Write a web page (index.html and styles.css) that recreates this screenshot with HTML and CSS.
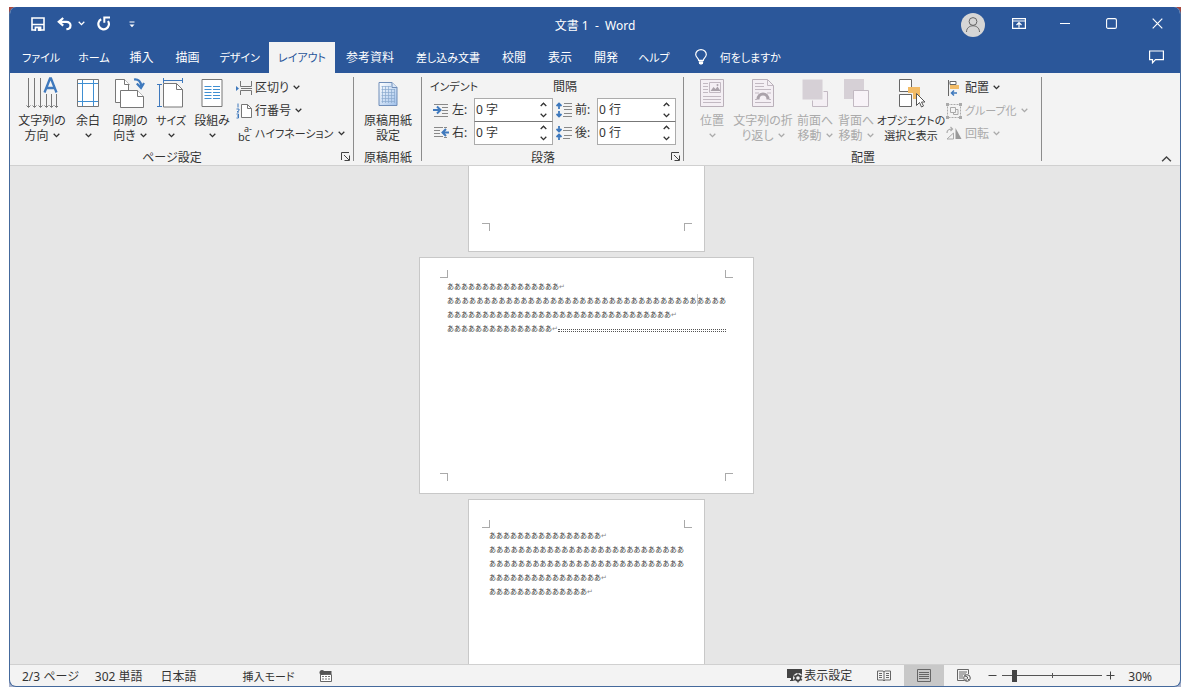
FILE: index.html
```html
<!DOCTYPE html>
<html lang="ja">
<head>
<meta charset="utf-8">
<title>文書 1 - Word</title>
<link rel="stylesheet" href="styles.css">
</head>
<body>
<svg class="defs" aria-hidden="true">
  <symbol id="chev" viewBox="0 0 7 5"><path d="M.7 .8 3.5 3.6 6.3 .8" fill="none" stroke="currentColor" stroke-width="1.3"/></symbol>
  <symbol id="chev-up" viewBox="0 0 7 5"><path d="M.7 4 3.5 1.2 6.3 4" fill="none" stroke="currentColor" stroke-width="1.3"/></symbol>
  <symbol id="launcher" viewBox="0 0 10 10"><path d="M.5 8V.5H8M3 3l5 5M8.5 3.5v5h-5" fill="none" stroke="#444"/></symbol>
</svg>
<div class="desktop">
<div class="window">
  <header class="titlebar">
    <div class="quick">
      <button class="plain" aria-label="保存"><svg width="14" height="14" viewBox="0 0 14 14"><path d="M1 1h12v12H1z" fill="none" stroke="#fff" stroke-width="1.6"/><path d="M1 7.5h12" stroke="#fff" stroke-width="1.4"/><path d="M3.6 9.5h6.8V14H3.6z" fill="#fff"/><path d="M5.2 11.2h1.6V14H5.2z" fill="#2b579a"/></svg></button>
      <button class="plain undo" aria-label="元に戻す"><svg width="15" height="14" viewBox="0 0 15 14"><path d="M6.2 1 1.8 4.8l4.4 3.8M2 4.8h7.2c6 0 5.400 7.200.2 7.400" fill="none" stroke="#fff" stroke-width="2.200"/></svg><svg class="chev" width="7" height="5"><use href="#chev"/></svg></button>
      <button class="plain" aria-label="繰り返し"><svg width="14" height="15" viewBox="0 0 14 15"><path d="M4.200 3.300A5.300 5.300 0 1 0 11 5" fill="none" stroke="#fff" stroke-width="2.200"/><path d="M7.300 6.700V1.500H13" fill="none" stroke="#fff" stroke-width="2"/></svg></button>
      <button class="plain more" aria-label="カスタマイズ"><svg width="6" height="7" viewBox="0 0 6 7"><path d="M.5 1h5" stroke="#fff"/><path d="M.5 3.500h5L3 6.300z" fill="#fff"/></svg></button>
    </div>
    <div class="doc-title">文書 1 &nbsp;-&nbsp; Word</div>
    <div class="sys">
      <button class="plain avatar" aria-label="アカウント"><svg width="24" height="24" viewBox="0 0 24 24"><circle cx="12" cy="12" r="12" fill="#d6d6d6"/><circle cx="12" cy="8.500" r="3.900" fill="none" stroke="#666"/><path d="M5.500 19c0-8.300 13-8.300 13 0" fill="none" stroke="#666"/></svg></button>
      <button class="plain sysbtn" aria-label="リボンの表示オプション"><svg width="14" height="11" viewBox="0 0 14 11"><path d="M.6.6h12.800v9.800H.6zM.6 3h12.800M7 9.500V5M4.500 7 7 4.600 9.500 7" fill="none" stroke="#fff" stroke-width="1.200"/></svg></button>
      <button class="plain sysbtn" aria-label="最小化"><svg width="12" height="11" viewBox="0 0 12 11"><path d="M1 5.500h10" stroke="#fff"/></svg></button>
      <button class="plain sysbtn" aria-label="最大化"><svg width="11" height="11" viewBox="0 0 11 11"><rect x=".6" y=".6" width="9.800" height="9.800" rx="1.500" fill="none" stroke="#fff" stroke-width="1.100"/></svg></button>
      <button class="plain sysbtn" aria-label="閉じる"><svg width="11" height="11" viewBox="0 0 11 11"><path d="M.7.7l9.600 9.600M10.300.7.7 10.300" stroke="#fff" stroke-width="1.200"/></svg></button>
    </div>
  </header>

  <nav class="tabs">
    <button class="tab kana">ファイル</button>
    <button class="tab kana">ホーム</button>
    <button class="tab">挿入</button>
    <button class="tab">描画</button>
    <button class="tab kana">デザイン</button>
    <button class="tab kana active">レイアウト</button>
    <button class="tab">参考資料</button>
    <button class="tab mixed">差し込み文書</button>
    <button class="tab">校閲</button>
    <button class="tab">表示</button>
    <button class="tab">開発</button>
    <button class="tab kana">ヘルプ</button>
    <button class="tab kana tell"><svg width="12" height="16" viewBox="0 0 12 16"><path d="M3.700 11.300C3.700 9 .7 8.500.7 5.500a5.300 4.900 0 0 1 10.600 0c0 3-3 3.500-3 5.800zM3.700 13h4.600" fill="none" stroke="#fff" stroke-width="1.200"/><path d="M4 12.500h4v1.700L7 15.500H5l-1-1.300z" fill="#fff"/></svg>何をしますか</button>
    <button class="plain comment" aria-label="コメント"><svg width="15" height="14" viewBox="0 0 15 14"><path d="M.6 1h13.800v8.700H6.500L3.500 12.800V9.700H.6z" fill="none" stroke="#fff" stroke-width="1.200"/></svg></button>
  </nav>

  <div class="ribbon">
    <section class="group page-setup">
      <div class="body">
        <button class="big w48"><svg width="32" height="32" viewBox="0 0 32 32"><g fill="none" stroke="#777"><path d="M2.500 1v29M8.500 1v29M14.500 1v29M20.500 17v13M25.500 17v13M30.500 17v13"/><path d="M.5 28.500l2 2 2-2M6.500 28.500l2 2 2-2M12.500 28.500l2 2 2-2M18.500 28.500l2 2 2-2M23.500 28.500l2 2 2-2M28.500 28.500l2 2 2-2"/></g><path d="M18.500 15.500 24 1.500h1l5.500 14M20.500 11h8" fill="none" stroke="#3f79bd" stroke-width="2.300"/></svg><span>文字列の<br>方向 <svg class="chev" width="7" height="5"><use href="#chev"/></svg></span></button>
        <button class="big w44"><svg width="24" height="32" viewBox="0 0 24 32"><path d="M1.500 2.500h21v27h-21z" fill="#fff" stroke="#777"/><path d="M6.500 3v26M17.500 3v26M2 6.500h20M2 24.500h20" stroke="#3f8fd2"/></svg><span>余白<br><svg class="chev" width="7" height="5"><use href="#chev"/></svg></span></button>
        <button class="big w40"><svg width="32" height="32" viewBox="0 0 32 32"><g fill="#fff" stroke="#777"><path d="M1.500 2.500h9l4 4v19h-13z"/><path d="M10.500 2.500v5h5" /><path d="M6.500 13.500h17l6 6v11h-23z"/><path d="M23.500 13.500v6h6"/></g><path d="M20 2.500c4.500-.5 7 2 7 6.500" fill="none" stroke="#3f79bd" stroke-width="2.200"/><path d="M22.800 6.500 27 11l3-5" fill="none" stroke="#3f79bd" stroke-width="2.200"/></svg><span>印刷の<br>向き <svg class="chev" width="7" height="5"><use href="#chev"/></svg></span></button>
        <button class="big w42"><svg width="28" height="32" viewBox="0 0 28 32"><path d="M6.500 6.500h13l6 6v17.500h-19z" fill="#fff" stroke="#777"/><path d="M19.500 6.500v6h6" fill="none" stroke="#777"/><path d="M6.500 3.500h19M6.500 1v5M25.500 1v5M2.500 7v23M0 7.500h5M0 29.500h5" stroke="#3f79bd"/></svg><span class="kana">サイズ<br><svg class="chev" width="7" height="5"><use href="#chev"/></svg></span></button>
        <button class="big w40"><svg width="24" height="32" viewBox="0 0 24 32"><path d="M2 2.500h20v27H2z" fill="#fff" stroke="#777"/><path d="M4.500 9.500h7M4.500 12.500h7M4.500 15.500h7M4.500 18.500h7M4.500 21.500h7M13 9.500h7M13 12.500h7M13 15.500h7M13 18.500h7M13 21.500h7" stroke="#3f8fd2"/></svg><span>段組み<br><svg class="chev" width="7" height="5"><use href="#chev"/></svg></span></button>
        <div class="smalls">
          <button class="small"><svg width="16" height="16" viewBox="0 0 16 16"><path d="M4.500 1v5.500h11V1M4.500 15v-4.500h11V15M5 8.500h11" fill="none" stroke="#777"/><path d="M0 6l3 2.500L0 11z" fill="#3f79bd"/></svg>区切り <svg class="chev" width="7" height="5"><use href="#chev"/></svg></button>
          <button class="small"><svg width="16" height="16" viewBox="0 0 16 16"><path d="M5.500 1.500h6l4 4v9h-10z" fill="#fff" stroke="#777"/><path d="M11.500 1.500v4h4" fill="none" stroke="#777"/><path d="M2 .5v4M.5 6h2.500v1.500L1 9h2M.5 11h2v4h-2M1 13h1.500" fill="none" stroke="#3f79bd"/></svg>行番号 <svg class="chev" width="7" height="5"><use href="#chev"/></svg></button>
          <button class="small kana"><span class="hyph"><span class="sup">a-</span><span class="bc">bc</span></span>ハイフネーション <svg class="chev" width="7" height="5"><use href="#chev"/></svg></button>
        </div>
      </div>
      <div class="foot"><span>ページ設定</span><button class="plain launch" aria-label="ページ設定の詳細"><svg width="10" height="10"><use href="#launcher"/></svg></button></div>
    </section>

    <section class="group genko">
      <div class="body center">
        <button class="big w52"><svg width="22" height="32" viewBox="0 0 22 32"><defs><linearGradient id="pg" x1="0" y1="0" x2="1" y2="1"><stop offset="0" stop-color="#fff"/><stop offset="1" stop-color="#9fc0ea"/></linearGradient></defs><path d="M2 5.500h13l5 5V28.500H2z" fill="url(#pg)" stroke="#6f8db8"/><path d="M15 5.500v5h5" fill="#dbe8f8" stroke="#6f8db8"/><path d="M5.500 9v17M8.500 9v17M11.500 9v17M14.500 12v14M17.500 12v14M4.500 9.500h9.500M4.500 12.500H18M4.500 15.500H18M4.500 18.500H18M4.500 21.500H18M4.500 24.500H18" stroke="#8aa9cf" stroke-width=".7"/></svg><span>原稿用紙<br>設定</span></button>
      </div>
      <div class="foot"><span>原稿用紙</span></div>
    </section>

    <section class="group para">
      <div class="fields">
        <div class="col">
          <h3 class="kana">インデント</h3>
          <div class="field">
            <svg width="16" height="14" viewBox="0 0 16 14"><path d="M1 1.500h14M9 4.500h6M9 7.500h6M9 10.500h6M1 13.500h14" stroke="#888"/><path d="M0 7h7M4 3.500 7.500 7 4 10.500" fill="none" stroke="#3f79bd" stroke-width="2"/></svg>
            <label for="il">左:</label>
            <div class="spin"><input id="il" type="text" value="0 字"><div class="arrows"><button aria-label="増やす"><svg width="7" height="5"><use href="#chev-up"/></svg></button><button aria-label="減らす"><svg width="7" height="5"><use href="#chev"/></svg></button></div></div>
          </div>
          <div class="field">
            <svg width="16" height="14" viewBox="0 0 16 14"><path d="M1 1.500h9M1 4.500h6M1 7.500h6M1 10.500h9M11 1.500h3M11 11.500h3" stroke="#888"/><path d="M16 6.500H9.500M13 3 9.500 6.500 13 10" fill="none" stroke="#3f79bd" stroke-width="2"/></svg>
            <label for="ir">右:</label>
            <div class="spin"><input id="ir" type="text" value="0 字"><div class="arrows"><button aria-label="増やす"><svg width="7" height="5"><use href="#chev-up"/></svg></button><button aria-label="減らす"><svg width="7" height="5"><use href="#chev"/></svg></button></div></div>
          </div>
        </div>
        <div class="col">
          <h3>間隔</h3>
          <div class="field">
            <svg width="16" height="16" viewBox="0 0 16 16"><path d="M8 1.500h8M7 4.500h9M8 7.500h8M8 11.500h8M7 14.500h9" stroke="#888"/><path d="M3 7V1.500M.5 4 3 1.500 5.500 4M3 9v5.500M.5 12 3 14.500 5.500 12" fill="none" stroke="#3f79bd" stroke-width="1.800"/></svg>
            <label for="sb">前:</label>
            <div class="spin"><input id="sb" type="text" value="0 行"><div class="arrows"><button aria-label="増やす"><svg width="7" height="5"><use href="#chev-up"/></svg></button><button aria-label="減らす"><svg width="7" height="5"><use href="#chev"/></svg></button></div></div>
          </div>
          <div class="field">
            <svg width="16" height="16" viewBox="0 0 16 16"><path d="M8 2.500h8M7 5.500h9M8 10.500h8M7 13.500h7" stroke="#888"/><path d="M3 1v5.500M.5 4 3 6.500 5.500 4M3 15V9.500M.5 12 3 9.500 5.500 12" fill="none" stroke="#3f79bd" stroke-width="1.800"/></svg>
            <label for="sa">後:</label>
            <div class="spin"><input id="sa" type="text" value="0 行"><div class="arrows"><button aria-label="増やす"><svg width="7" height="5"><use href="#chev-up"/></svg></button><button aria-label="減らす"><svg width="7" height="5"><use href="#chev"/></svg></button></div></div>
          </div>
        </div>
      </div>
      <div class="foot"><span>段落</span><button class="plain launch" aria-label="段落の詳細"><svg width="10" height="10"><use href="#launcher"/></svg></button></div>
    </section>

    <section class="group arrange">
      <div class="body">
        <button class="big w40" disabled><svg width="24" height="32" viewBox="0 0 24 32"><path d="M.5 2.500h23v27H.5z" fill="#f4eff4" stroke="#b9b0b9"/><path d="M3 6.500h5M3 9.500h5M3 12.500h5M3 15.500h5M3 19.500h18M3 22.500h18M3 25.500h18M9.500 5.500h11v10h-11z" fill="none" stroke="#c2b9c2"/><path d="M10.500 14l3-4 2 2 2-2.500 3 4.500z" fill="#aaa2aa"/><circle cx="17.500" cy="8" r="1" fill="#aaa2aa"/></svg><span>位置<br><svg class="chev" width="7" height="5"><use href="#chev"/></svg></span></button>
        <button class="big w62" disabled><svg width="24" height="32" viewBox="0 0 24 32"><path d="M1.500 2.500h15l6 6v21h-21z" fill="#f4eff4" stroke="#b9b0b9"/><path d="M16.500 2.500v6h6M4 6.500h9M4 9.500h9M4 12.500h16M4 16h4M16 16h4M4 25.500h16M4 22.500h2M18 22.500h2" fill="none" stroke="#c2b9c2"/><path d="M7 22.500c0-7.500 10-7.500 10 0" fill="none" stroke="#aaa2aa" stroke-width="3"/></svg><span>文字列の折<br>り返し <svg class="chev" width="7" height="5"><use href="#chev"/></svg></span></button>
        <button class="big w42" disabled><svg width="28" height="32" viewBox="0 0 28 32"><path d="M11.500 14.500h15v15h-15z" fill="#f4eff4" stroke="#c2b9c2"/><path d="M1 2h21v21H1z" fill="#d6d0d6" stroke="#f3f3f3"/></svg><span>前面へ<br>移動 <svg class="chev" width="7" height="5"><use href="#chev"/></svg></span></button>
        <button class="big w40" disabled><svg width="28" height="32" viewBox="0 0 28 32"><path d="M2 2h20v20H2z" fill="#d6d0d6"/><path d="M11.500 13.500h15v16h-15z" fill="#f8f3f8" stroke="#c2b9c2"/></svg><span>背面へ<br>移動 <svg class="chev" width="7" height="5"><use href="#chev"/></svg></span></button>
        <button class="big w70"><svg width="28" height="32" viewBox="0 0 28 32"><path d="M2.500 2.500h12v12h-12zM2.500 17.500h12v12h-12z" fill="#fff" stroke="#666"/><path d="M11 10h12v12h-7v-6h-5z" fill="#f2bb66"/><path d="M19.500 16.500v12l3-3 2 4.500 2-1-2-4h3.500z" fill="#fff" stroke="#555"/></svg><span class="kana">オブジェクトの<br>選択と表示</span></button>
        <div class="smalls near">
          <button class="small"><svg width="16" height="16" viewBox="0 0 16 16"><path d="M2.500 0v16" stroke="#666"/><path d="M4 1.500h6v3H4z" fill="#fff" stroke="#666"/><path d="M4 5h9v4H4z" fill="#f2bb66"/><path d="M11 13H5.500M8 10.500 5.500 13 8 15.500" fill="none" stroke="#3f79bd" stroke-width="1.500"/></svg>配置 <svg class="chev" width="7" height="5"><use href="#chev"/></svg></button>
          <button class="small kana" disabled><svg width="16" height="16" viewBox="0 0 16 16"><path d="M1.500 1.500h13v13h-13z" fill="none" stroke="#aaa" stroke-dasharray="2 1"/><path d="M4.500 4.500h5v5h-5zM7.500 10v1.500h4.500v-5h-2" fill="none" stroke="#aaa"/><path d="M0 0h3v3H0zM13 0h3v3h-3zM0 13h3v3H0zM13 13h3v3h-3z" fill="#aaa"/></svg>グループ化 <svg class="chev" width="7" height="5"><use href="#chev"/></svg></button>
          <button class="small" disabled><svg width="16" height="16" viewBox="0 0 16 16"><path d="M9.500 2v11H15.500z" fill="#999"/><path d="M7.500 7v6H1z" fill="none" stroke="#aaa"/><path d="M1 7c0-3 2-4 5-4M4.500 1l2 2-2 2" fill="none" stroke="#aaa" stroke-width="1.200"/></svg>回転 <svg class="chev" width="7" height="5"><use href="#chev"/></svg></button>
        </div>
      </div>
      <div class="foot"><span>配置</span></div>
    </section>
    <button class="plain collapse" aria-label="リボンを折りたたむ"><svg width="11" height="8" viewBox="0 0 7 5"><path d="M.7 4 3.500 1.200 6.300 4" fill="none" stroke="#444" stroke-width=".9"/></svg></button>
  </div>

  <main class="canvas">
    <article class="page upper"><i class="mark bl"></i><i class="mark br"></i></article>
    <article class="page wide">
      <i class="mark tl"></i><i class="mark tr"></i><i class="mark bl"></i><i class="mark br"></i>
      <p>ああああああああああああああああ<span class="ret">↵</span></p>
      <p class="full">ああああああああああああああああああああああああああああああああああ<span class="caret"></span>ああああ</p>
      <p>ああああああああああああああああああああああああああああああああ<span class="ret">↵</span></p>
      <p class="break">あああああああああああああああ<span class="ret">↵</span><span class="rule"></span></p>
    </article>
    <article class="page lower">
      <i class="mark tl"></i><i class="mark tr"></i>
      <p>ああああああああああああああああ<span class="ret">↵</span></p>
      <p class="full">あああああああああああああああああああああああああああ</p>
      <p class="full">あああああああああああああああああああああああああああ</p>
      <p>ああああああああああああああああ<span class="ret">↵</span></p>
      <p>ああああああああああああああ<span class="ret">↵</span></p>
    </article>
  </main>

  <footer class="status">
    <button class="plain st">2/3 ページ</button>
    <button class="plain st words">302 単語</button>
    <button class="plain st lang">日本語</button>
    <button class="plain st mode kana">挿入モード</button>
    <button class="plain macro" aria-label="マクロの記録"><svg width="13" height="12" viewBox="0 0 13 12"><path d="M1.500 4.500h11v7h-11z" fill="#fff" stroke="#666"/><path d="M5 1h7.500v3H5z" fill="#555"/><circle cx="3" cy="2.500" r="2.500" fill="#555"/><path d="M3 6.500h8M3 9h8" stroke="#777" stroke-dasharray="2 1"/></svg></button>
    <div class="right">
      <button class="plain disp"><svg width="16" height="15" viewBox="0 0 16 15"><path d="M0 1h15v9H0zM4 10h4v3H3v-1h1z" fill="#444"/><circle cx="11" cy="10" r="5" fill="#f3f3f3"/><circle cx="11" cy="10" r="2.600" fill="none" stroke="#444" stroke-width="1.600"/><path d="M11 5.500v2M11 12.500v2M7 7.800l1.700 1M13.300 11.200l1.700 1M7 12.200l1.700-1M13.300 8.800l1.700-1" stroke="#444" stroke-width="1.400"/></svg>表示設定</button>
      <button class="plain view" aria-label="閲覧モード"><svg width="14" height="12" viewBox="0 0 14 12"><path d="M.5 1h5.500l1 .8L8 1h5.500v9H8l-1 1-1-1H.5zM7 2v9M2 3.500h3M2 5.500h3M2 7.500h3M9 3.500h3M9 5.500h3M9 7.500h3" fill="none" stroke="#666"/></svg></button>
      <button class="plain view on" aria-label="印刷レイアウト"><svg width="14" height="13" viewBox="0 0 14 13"><path d="M.5.5h13v12H.5zM2 3.500h10M2 5.500h10M2 7.500h10M2 9.500h10" fill="none" stroke="#666"/></svg></button>
      <button class="plain view" aria-label="Web レイアウト"><svg width="14" height="13" viewBox="0 0 14 13"><path d="M7 11.500H.5v-11h11V5M2 3h8M2 5h7M2 7h4M2 9h4" fill="none" stroke="#666"/><circle cx="10" cy="9" r="3.300" fill="#f3f3f3" stroke="#555"/><path d="M8 7l2.500 1v1.500L12 11M9 12V9.500" fill="none" stroke="#555"/></svg></button>
      <button class="plain zoombtn" aria-label="縮小"><svg width="9" height="9" viewBox="0 0 9 9"><path d="M.5 4.500h8" stroke="#444"/></svg></button>
      <input class="zoom" type="range" min="0" max="100" value="10" aria-label="ズーム">
      <button class="plain zoombtn" aria-label="拡大"><svg width="9" height="9" viewBox="0 0 9 9"><path d="M.5 4.500h8M4.500.5v8" stroke="#444"/></svg></button>
      <button class="plain pct">30%</button>
    </div>
  </footer>
</div>
</div>
</body>
</html>
```
FILE: styles.css
```css
* { box-sizing: border-box; }
body {
  margin: 0;
  padding: 7px 9px;
  height: 100vh;
  background: #fff;
  font: 12px/15px "Noto Sans", "Noto Sans CJK JP", sans-serif;
  font-feature-settings: "palt";
  color: #333;
}
button, input { font: inherit; font-feature-settings: inherit; color: inherit; }
button { background: none; border: 0; padding: 0; white-space: nowrap; }
svg { flex: none; }
.kana, .mixed { font-size: 11px; }
.defs { position: absolute; width: 0; height: 0; }
.plain { display: flex; align-items: center; justify-content: center; }

.desktop { height: 100%; background: linear-gradient(#a8473f 50%, #a9b2cc 50%); }
.window {
  height: 100%;
  display: flex;
  flex-direction: column;
  border: 1px solid #44699c;
  border-top: 0;
  border-radius: 7px;
  background: #f3f3f3;
  overflow: hidden;
}

.titlebar {
  display: grid;
  grid-template-columns: 1fr auto 1fr;
  align-items: center;
  height: 35px;
  flex: none;
  background: #2b579a;
  color: #fff;
}
.quick { display: flex; align-items: center; padding: 0 0 2px 21px; gap: 12px; }
.undo { gap: 6px; }
.undo .chev { margin-left: 0; }
.more { margin: 2px 0 0 6px; }
.doc-title { padding-top: 2px; }
.sys { display: flex; align-items: center; justify-content: flex-end; }
.avatar { margin-right: 11px; }
.sysbtn { width: 46px; height: 30px; padding-bottom: 3px; }

.tabs { display: flex; flex: none; height: 31px; background: #2b579a; color: #fff; border-bottom: 1px solid #2b579a; }
.tab { padding: 0 11px; }
.tab.kana { padding: 0 9px; }
.tab:first-child { padding-left: 12px; }
.tab.active { background: #f3f3f3; color: #2b579a; margin-bottom: -1px; }
.tabs .tell { display: flex; align-items: center; gap: 13px; padding-left: 16px; }
.comment { margin-left: auto; margin-right: 16px; }

.ribbon { display: flex; flex: none; height: 93px; border-bottom: 1px solid #d0d0d0; }
.group { position: relative; display: flex; flex-direction: column; padding: 3px 8px 0; }
.group::after {
  content: "";
  position: absolute;
  right: 0;
  top: 4px;
  bottom: 4px;
  width: 1px;
  background: #8c8c8c;
}
.page-setup { width: 344px; }
.genko { width: 68px; }
.para { width: 262px; }
.arrange { width: 358px; }
.body { display: flex; }
.center { justify-content: center; }
.big {
  display: flex;
  flex: none;
  flex-direction: column;
  align-items: center;
  padding-top: 1px;
  text-align: center;
}
.big span { padding-top: 4px; }
.w40 { width: 40px; }
.w42 { width: 42px; }
.w44 { width: 44px; }
.w48 { width: 48px; }
.w52 { width: 52px; }
.w62 { width: 62px; }
.w70 { width: 70px; }
.chev { vertical-align: 2px; margin-left: 1px; }
button:disabled { color: #aaa; }
.smalls { display: flex; flex: none; flex-direction: column; padding-left: 4px; }
.near { padding-left: 0; }
.small { display: flex; align-items: center; gap: 3px; height: 23px; }
.hyph { display: flex; flex-direction: column; width: 16px; font-size: 11px; }
.sup { align-self: flex-end; font-size: 9px; line-height: 6px; }
.bc { line-height: 9px; }
.foot { display: flex; align-items: center; margin-top: auto; height: 16px; }
.foot span { flex: 1; text-align: center; }
.launch { width: 16px; margin: 0 -8px 0 12px; }

.fields { display: flex; }
.col { width: 123px; }
h3 { margin: 0; font-size: 12px; font-weight: 400; line-height: 22px; }
h3.kana { font-size: 11px; }
.field { display: flex; align-items: center; height: 23px; }
.field > svg { margin-left: 3px; }
.field label { width: 25px; padding-left: 3px; }
.spin { display: flex; width: 79px; height: 24px; background: #fff; border: 1px solid #ababab; }
.field + .field .spin { border-top-color: #777; }
.spin input { flex: 1; min-width: 0; border: 0; padding: 0 1px; background: none; }
.arrows { display: flex; flex-direction: column; width: 18px; }
.arrows button { flex: 1; display: flex; align-items: center; justify-content: center; }
.collapse { margin-left: auto; align-self: flex-end; padding: 0 8px 2px; }

.canvas {
  flex: 1;
  min-height: 0;
  overflow: hidden;
  display: flex;
  flex-direction: column;
  align-items: center;
  gap: 5px;
  padding-right: 17px;
  background: #e6e6e6;
}
.page {
  position: relative;
  flex: none;
  width: 237px;
  padding: 29px 20px 0;
  background: #fff;
  border: 1px solid #c8c8c8;
  font-size: 7px;
  line-height: 14px;
  font-feature-settings: normal;
}
.upper { height: 86px; border-top: 0; }
.wide { width: 335px; height: 237px; padding: 22px 27px 0; }
.lower { height: 237px; }
.page p { margin: 0; white-space: nowrap; }
.page .full { text-align: justify; text-align-last: justify; white-space: normal; }
.ret { color: #888; }
.caret { position: absolute; width: 1px; height: 12px; background: #ccc; }
.break { display: flex; align-items: center; }
.rule { flex: 1; height: 3px; margin-top: 2px; border-top: 1px dotted #555; border-bottom: 1px dotted #555; }
.mark { position: absolute; width: 8px; height: 8px; border: 0 solid #aaa; }
.tl { top: 20px; left: 13px; border-width: 0 1px 1px 0; }
.tr { top: 20px; right: 12px; border-width: 0 0 1px 1px; }
.bl { bottom: 20px; left: 13px; border-width: 1px 1px 0 0; }
.br { bottom: 20px; right: 12px; border-width: 1px 0 0 1px; }
.wide .tl, .wide .bl { left: 20px; }
.wide .tr, .wide .br { right: 20px; }
.wide .tl, .wide .tr { top: 12px; }
.wide .bl, .wide .br { bottom: 12px; }

.status { display: flex; flex: none; height: 22px; padding-left: 12px; border-top: 1px solid #d0d0d0; }
.st { margin-right: 16px; padding-top: 1px; }
.words { margin-right: 18px; }
.lang { margin-right: 46px; }
.mode { margin-right: 24px; }
.right { display: flex; align-items: center; margin-left: auto; }
.disp { gap: 1px; margin-right: 12px; }
.view { width: 40px; height: 21px; }
.on { background: #c8c8c8; }
.zoombtn { width: 9px; height: 21px; margin-left: 4px; }
.zoom {
  appearance: none;
  width: 100px;
  height: 13px;
  margin: 0 0 0 5px;
  background:
    linear-gradient(#555, #555) center / 1px 5px no-repeat,
    linear-gradient(#555, #555) center / 100% 1px no-repeat;
}
.zoom::-webkit-slider-thumb { appearance: none; width: 5px; height: 12px; background: #444; }
.pct { margin: 0 28px 0 13px; padding-top: 1px; }
```
